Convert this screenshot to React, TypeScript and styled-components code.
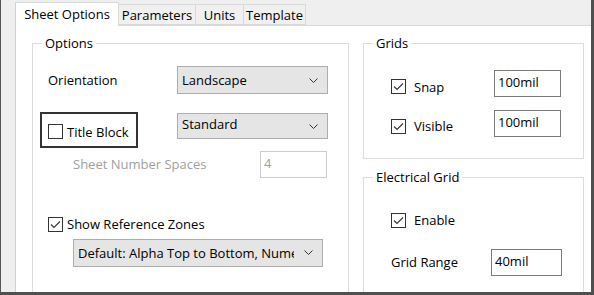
import styled, { createGlobalStyle } from 'styled-components';

const GlobalStyle = createGlobalStyle`
  html, body {
    margin: 0;
    padding: 0;
    background: #ffffff;
  }
  body {
    font-family: 'Open Sans', 'Noto Sans', 'Liberation Sans', sans-serif;
    font-size: 13px;
    color: #000;
  }
`;

const TABS = [
  { label: 'Sheet Options', width: 104 },
  { label: 'Parameters', width: 77 },
  { label: 'Units', width: 48 },
  { label: 'Template', width: 62 },
];

function Chevron() {
  return (
    <svg width="9" height="5" viewBox="0 0 9 5">
      <polyline points="0.5,0.5 4.5,4.5 8.5,0.5" fill="none" stroke="#333" strokeWidth="1" />
    </svg>
  );
}

function CheckBox({ checked }: { checked?: boolean }) {
  return (
    <Box>
      {checked && (
        <svg width="13" height="13" viewBox="0 0 13 13">
          <polyline points="2,6.5 5,9.5 11,3.5" fill="none" stroke="#333" strokeWidth="1.1" />
        </svg>
      )}
    </Box>
  );
}

export default function App() {
  return (
    <>
      <GlobalStyle />
      <Window>
        <TabStrip>
          {TABS.map((t, i) => (
            <Tab key={t.label} $active={i === 0} $width={t.width}>
              {t.label}
            </Tab>
          ))}
        </TabStrip>
        <Page>
          <Group $width={317}>
            <Legend>Options</Legend>
            <Row $top={14} $height={28}>
              <Label $width={129}>Orientation</Label>
              <Select $width={151}>
                <span>Landscape</span>
                <Chevron />
              </Select>
            </Row>
            <Row $top={18} $height={36} $align="flex-start">
              <FocusBox>
                <CheckBox />
                <span>Title Block</span>
              </FocusBox>
              <Select $width={151} $height={26} $shift={-2} style={{ marginLeft: 39, marginTop: 1 }}>
                <span>Standard</span>
                <Chevron />
              </Select>
            </Row>
            <Row $top={3} $height={26}>
              <Label $width={212} $disabled $indent={25}>
                Sheet Number Spaces
              </Label>
              <TextInput $width={67} $disabled>
                4
              </TextInput>
            </Row>
            <Row $top={37} $height={20}>
              <CheckLabel>
                <CheckBox checked />
                <span>Show Reference Zones</span>
              </CheckLabel>
            </Row>
            <Row $top={5} $height={27} $indent={25}>
              <Select $width={250}>
                <Clip>Default: Alpha Top to Bottom, Numeric Left to Right</Clip>
                <Chevron />
              </Select>
            </Row>
          </Group>
          <RightColumn>
            <Group $width={221} $bottom={21}>
              <Legend>Grids</Legend>
              <Row $top={18} $height={27} $indent={12}>
                <CheckLabel $width={103} $gap={8} $drop={6}>
                  <CheckBox checked />
                  <span>Snap</span>
                </CheckLabel>
                <TextInput $width={67}>100mil</TextInput>
              </Row>
              <Row $top={13} $height={27} $indent={12}>
                <CheckLabel $width={103} $gap={8} $drop={5}>
                  <CheckBox checked />
                  <span>Visible</span>
                </CheckLabel>
                <TextInput $width={67}>100mil</TextInput>
              </Row>
            </Group>
            <Group $width={221} $top={10}>
              <Legend>Electrical Grid</Legend>
              <Row $top={24} $height={20} $indent={12}>
                <CheckLabel $gap={8}>
                  <CheckBox checked />
                  <span>Enable</span>
                </CheckLabel>
              </Row>
              <Row $top={18} $height={28} $indent={12}>
                <Label $width={100}>Grid Range</Label>
                <TextInput $width={71}>40mil</TextInput>
              </Row>
            </Group>
          </RightColumn>
        </Page>
      </Window>
    </>
  );
}

const Window = styled.div`
  box-sizing: border-box;
  width: 594px;
  height: 295px;
  overflow: hidden;
  display: flex;
  flex-direction: column;
  background: #efefef;
  border-left: 1px solid #555;
  border-right: 3px solid #4f4f4f;
  border-bottom: 3px solid #4f4f4f;
  padding-left: 14px;
`;

const TabStrip = styled.div`
  display: flex;
  align-items: flex-end;
  height: 25px;
  flex-shrink: 0;
`;

const Tab = styled.div<{ $active?: boolean; $width: number }>`
  box-sizing: border-box;
  width: ${(p) => p.$width}px;
  height: ${(p) => (p.$active ? 24 : 21)}px;
  margin-bottom: ${(p) => (p.$active ? -1 : 0)}px;
  display: flex;
  align-items: center;
  justify-content: center;
  padding-bottom: ${(p) => (p.$active ? 2 : 0)}px;
  background: ${(p) => (p.$active ? '#ffffff' : '#f0f0f0')};
  border: 1px solid #d9d9d9;
  border-bottom: ${(p) => (p.$active ? 'none' : '1px solid #d9d9d9')};
  border-left: ${(p) => (p.$active ? '1px solid #d0d0d0' : 'none')};
  position: relative;
  z-index: ${(p) => (p.$active ? 1 : 0)};
  white-space: nowrap;
`;

const Page = styled.div`
  flex: 1;
  display: flex;
  gap: 14px;
  background: #ffffff;
  border-top: 1px solid #d9d9d9;
  border-left: 1px solid #d0d0d0;
  padding-left: 16px;
`;

const RightColumn = styled.div`
  display: flex;
  flex-direction: column;
`;

const Group = styled.fieldset<{ $width: number; $top?: number; $bottom?: number }>`
  box-sizing: border-box;
  width: ${(p) => p.$width}px;
  margin: ${(p) => p.$top ?? 9}px 0 0 0;
  padding: 0 0 ${(p) => p.$bottom ?? 40}px 15px;
  border: 1px solid #dcdcdc;
  min-width: 0;
`;

const Legend = styled.legend`
  margin-left: -6px;
  padding: 0 3px;
  line-height: 17px;
`;

const Row = styled.div<{ $top: number; $height: number; $indent?: number; $align?: string }>`
  display: flex;
  align-items: ${(p) => p.$align ?? 'center'};
  margin-top: ${(p) => p.$top}px;
  height: ${(p) => p.$height}px;
  padding-left: ${(p) => p.$indent ?? 0}px;
`;

const Label = styled.div<{ $width: number; $disabled?: boolean; $indent?: number }>`
  width: ${(p) => p.$width}px;
  flex-shrink: 0;
  padding-left: ${(p) => p.$indent ?? 0}px;
  box-sizing: border-box;
  color: ${(p) => (p.$disabled ? '#a0a0a0' : '#000')};
  white-space: nowrap;
`;

const Select = styled.div<{ $width: number; $height?: number; $shift?: number }>`
  box-sizing: border-box;
  width: ${(p) => p.$width}px;
  height: ${(p) => p.$height ?? 28}px;
  display: flex;
  align-items: center;
  justify-content: space-between;
  padding: 0 9px ${(p) => -(p.$shift ?? 0) * 2}px 4px;
  background: #e5e5e5;
  border: 1px solid #adadad;
  white-space: nowrap;
  & > svg {
    margin-top: ${(p) => -(p.$shift ?? 0) * 2}px;
  }
`;

const Clip = styled.span`
  overflow: hidden;
  width: 216px;
`;

const TextInput = styled.div<{ $width: number; $disabled?: boolean }>`
  box-sizing: border-box;
  width: ${(p) => p.$width}px;
  height: 27px;
  display: flex;
  align-items: center;
  padding: 0 0 3px 3px;
  background: #fff;
  border: 1px solid ${(p) => (p.$disabled ? '#cccccc' : '#7a7a7a')};
  color: ${(p) => (p.$disabled ? '#a0a0a0' : '#000')};
`;

const Box = styled.div`
  box-sizing: border-box;
  width: 15px;
  height: 15px;
  border: 1px solid #333;
  background: #fff;
  display: flex;
  align-items: center;
  justify-content: center;
  flex-shrink: 0;
`;

const CheckLabel = styled.div<{ $width?: number; $gap?: number; $drop?: number }>`
  display: flex;
  align-items: center;
  gap: ${(p) => p.$gap ?? 4}px;
  width: ${(p) => (p.$width ? `${p.$width}px` : 'auto')};
  margin-top: ${(p) => p.$drop ?? 0}px;
  flex-shrink: 0;
  white-space: nowrap;
`;

const FocusBox = styled.div`
  box-sizing: border-box;
  width: 98px;
  height: 36px;
  margin-left: -8px;
  display: flex;
  align-items: center;
  gap: 4px;
  padding: 3px 0 0 6px;
  border: 2px solid #333;
  white-space: nowrap;
`;
